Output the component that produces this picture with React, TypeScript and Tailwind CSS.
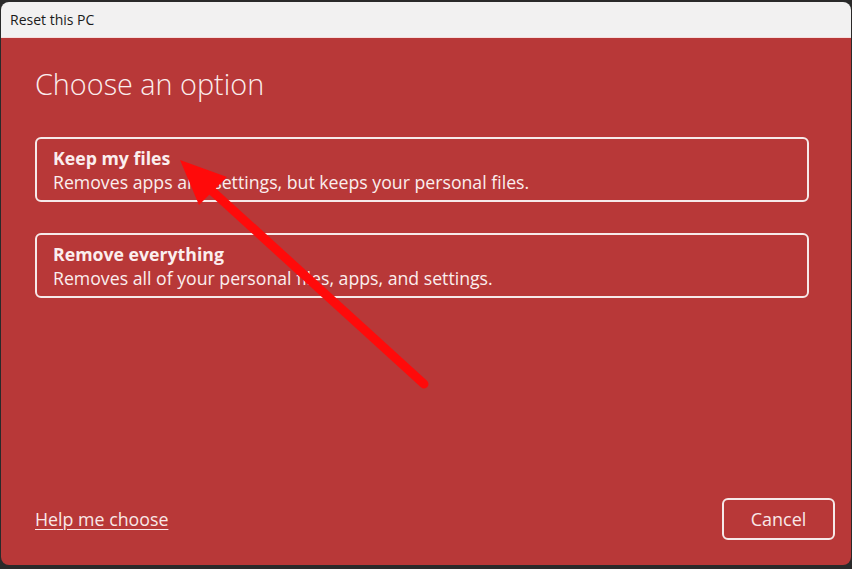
export default function App() {
  return (
    <div className="relative w-[852px] h-[569px] bg-[#2a2a2a] overflow-hidden" style={{ fontFamily: '"Open Sans", "Noto Sans", sans-serif' }}>
      <div className="mx-[1px] mt-[2px] h-[563px] rounded-t-[8px] rounded-b-[8px] overflow-hidden flex flex-col">
        {/* title bar */}
        <div className="h-[36px] shrink-0 bg-[#f2f1f1] border-b border-[#f6dede] flex items-center pl-[9px]">
          <span className="text-[14px] text-[#1a1a1a]">Reset this PC</span>
        </div>

        {/* body */}
        <div className="flex-1 bg-[#b83838] flex flex-col px-[34px] pt-[27px] pb-[25px] text-[#fbeeee]">
          <h1 className="text-[28.8px] font-light leading-[38px]">Choose an option</h1>

          <div className="mt-[34px] flex flex-col gap-[31px] pr-[8px]">
            <div className="h-[65px] border-2 border-[#f6e9e9] rounded-[6px] pl-[16px] pt-[1px] flex flex-col justify-center">
              <div className="text-[17.7px] font-bold leading-[24px]">Keep my files</div>
              <div className="text-[17.7px] leading-[25px]">Removes apps and settings, but keeps your personal files.</div>
            </div>
            <div className="h-[65px] border-2 border-[#f6e9e9] rounded-[6px] pl-[16px] pt-[1px] flex flex-col justify-center">
              <div className="text-[17.7px] font-bold leading-[24px]">Remove everything</div>
              <div className="text-[17.7px] leading-[25px]">Removes all of your personal files, apps, and settings.</div>
            </div>
          </div>

          <div className="mt-auto flex items-center justify-between">
            <a className="text-[17.8px] underline underline-offset-[3px] decoration-1 text-[#f9e8e8]">Help me choose</a>
            <button className="w-[113px] h-[42px] border-2 border-[#f6e9e9] rounded-[6px] text-[18px] text-[#f9e8e8] -mr-[18px]">Cancel</button>
          </div>
        </div>
      </div>

      {/* annotation arrow */}
      <svg className="absolute left-0 top-0 pointer-events-none" width="852" height="569" viewBox="0 0 852 569">
        <line x1="424" y1="384" x2="200" y2="180" stroke="#ff0a0a" strokeWidth="9" strokeLinecap="round" />
        <polygon points="180,160 227,177 199,205" fill="#ff0a0a" />
      </svg>
    </div>
  );
}
